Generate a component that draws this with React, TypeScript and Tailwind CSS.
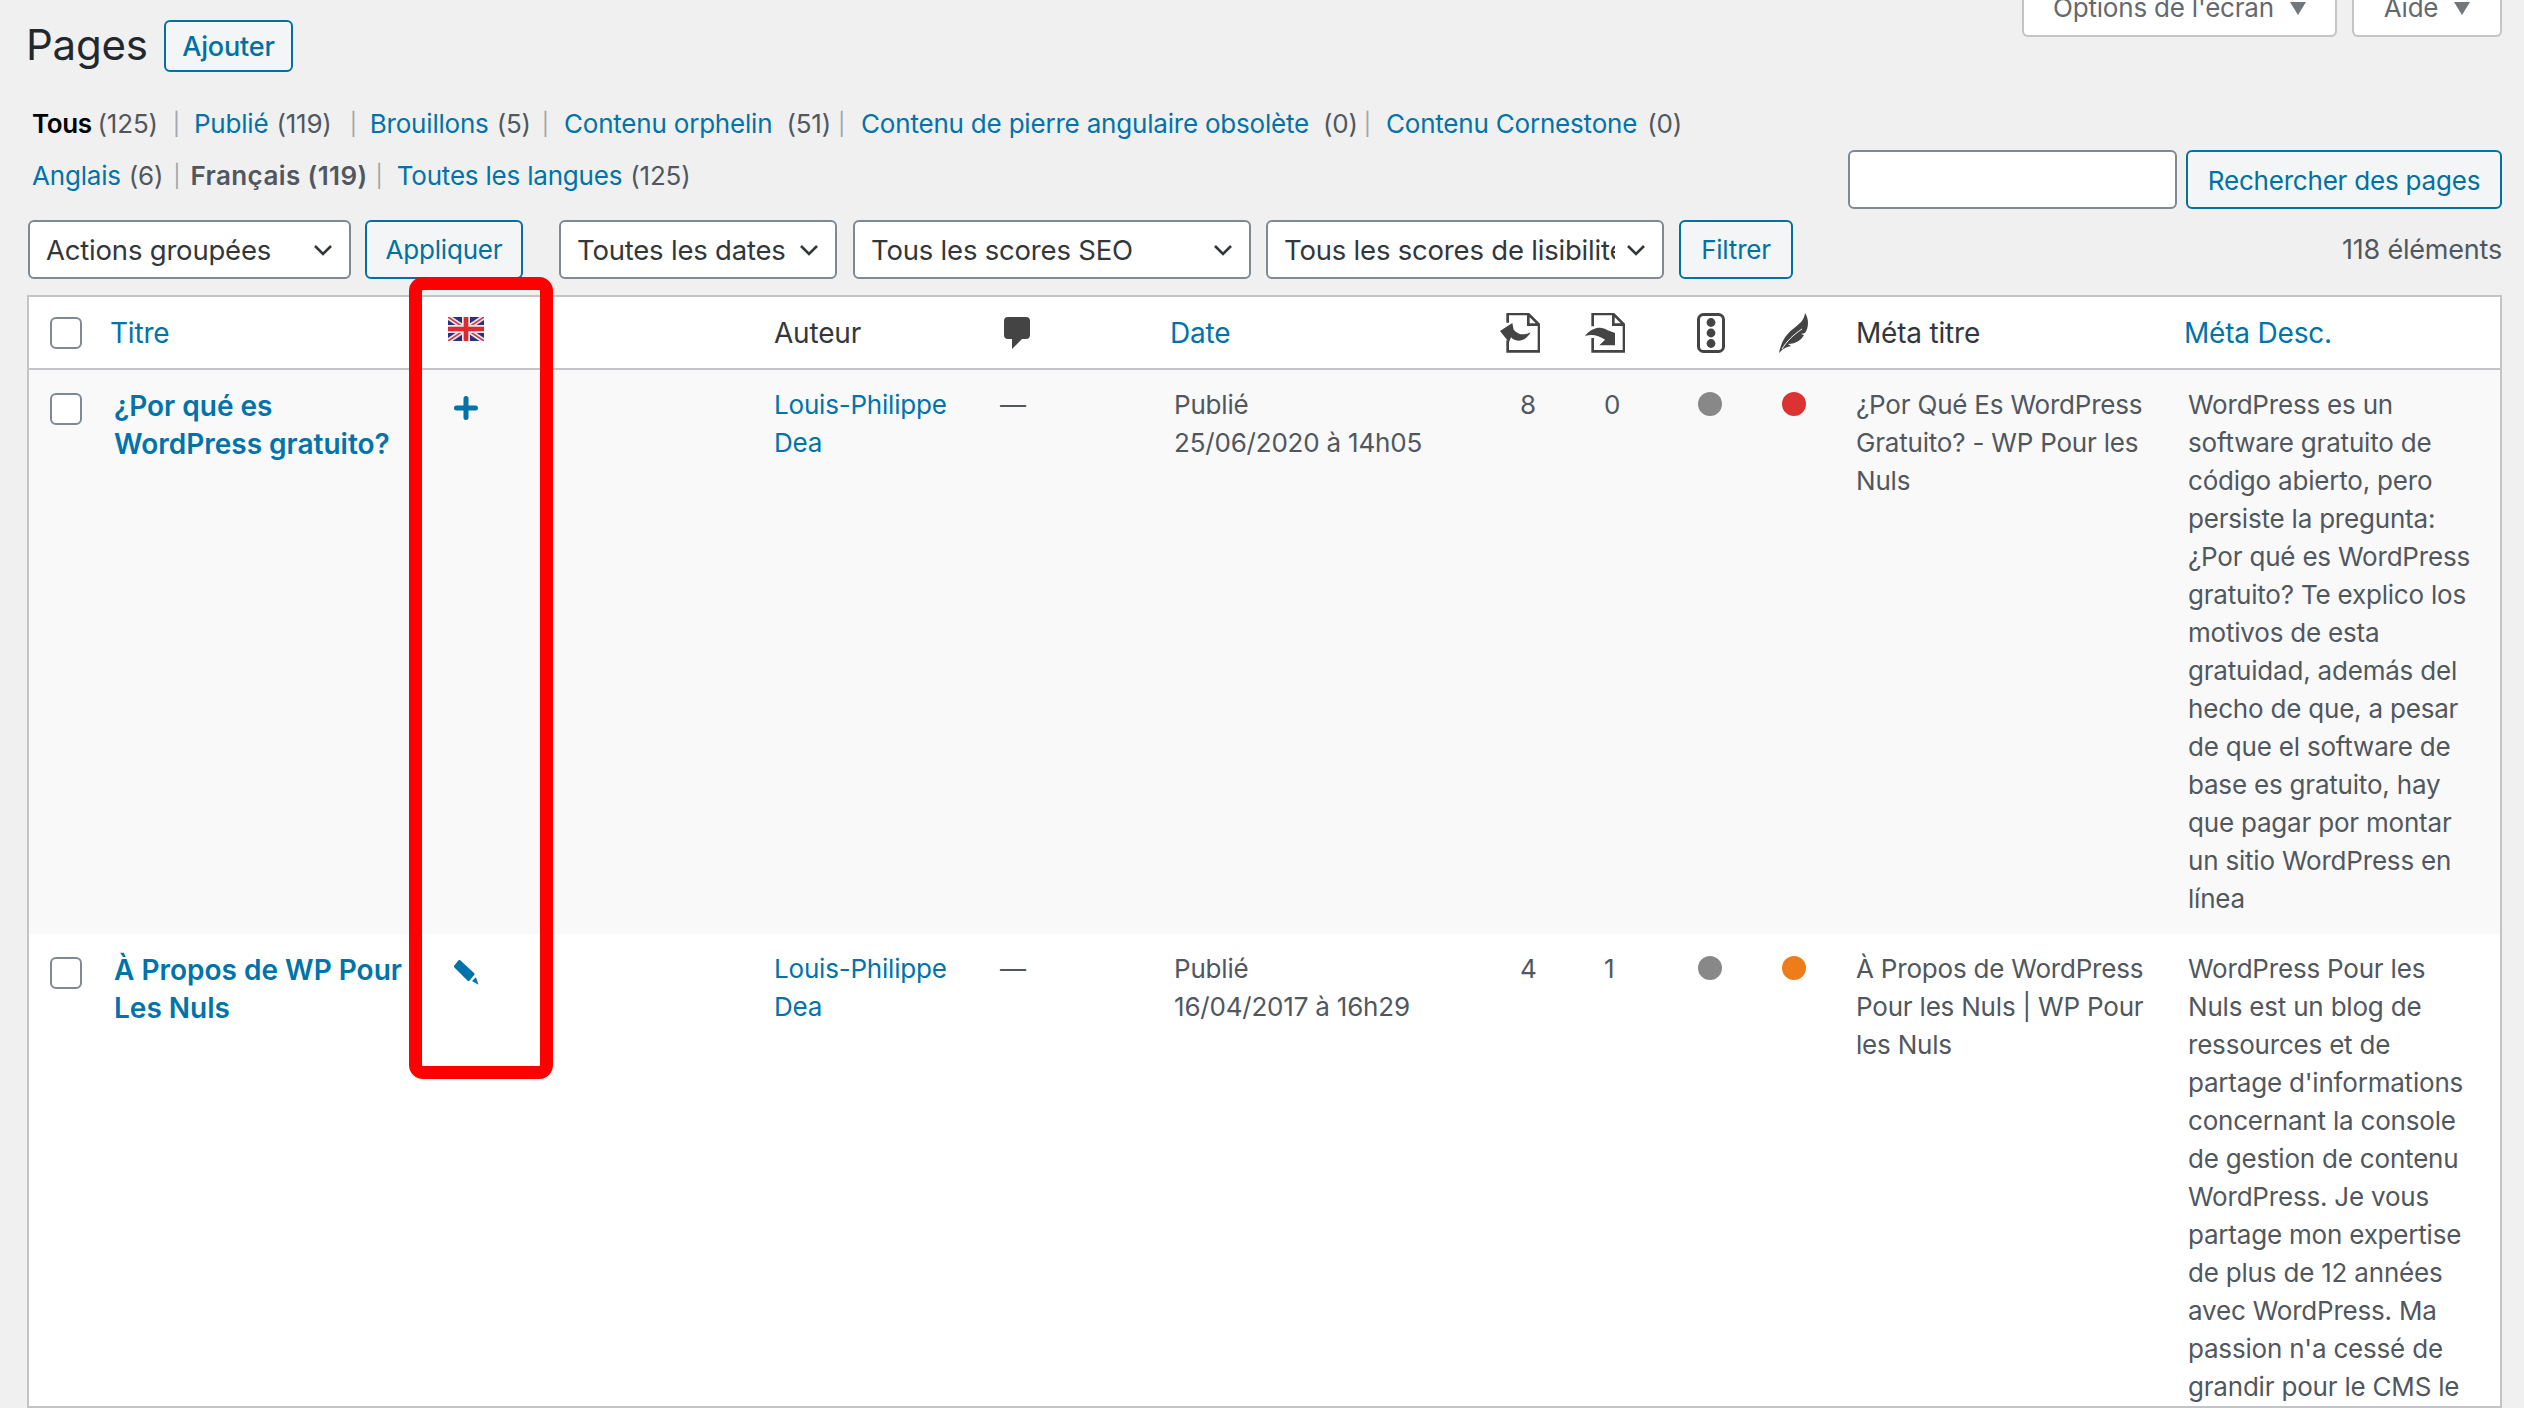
import { ReactNode } from 'react'

const font = "font-['Inter',sans-serif]"

const descOne = [
  'WordPress es un',
  'software gratuito de',
  'código abierto, pero',
  'persiste la pregunta:',
  '¿Por qué es WordPress',
  'gratuito? Te explico los',
  'motivos de esta',
  'gratuidad, además del',
  'hecho de que, a pesar',
  'de que el software de',
  'base es gratuito, hay',
  'que pagar por montar',
  'un sitio WordPress en',
  'línea',
]

const descTwo = [
  'WordPress Pour les',
  'Nuls est un blog de',
  'ressources et de',
  "partage d'informations",
  'concernant la console',
  'de gestion de contenu',
  'WordPress. Je vous',
  'partage mon expertise',
  'de plus de 12 années',
  'avec WordPress. Ma',
  "passion n'a cessé de",
  'grandir pour le CMS le',
]

function Lines({ items }: { items: string[] }) {
  return (
    <>
      {items.map((line) => (
        <div key={line} className="whitespace-nowrap">{line}</div>
      ))}
    </>
  )
}

function Chevron() {
  return (
    <svg width="20" height="12" viewBox="0 0 20 12" className="shrink-0">
      <path d="M2 2l8 8 8-8" fill="none" stroke="#32373c" strokeWidth="2.6" />
    </svg>
  )
}

function Select({ label, className, textClass }: { label: string; className: string; textClass?: string }) {
  return (
    <div className={`flex h-[59px] items-center justify-between rounded-[6px] border-2 border-[#7e8993] bg-white pl-[16px] pr-[16px] text-[27.5px] text-[#32373c] ${className}`}>
      <span className={`overflow-hidden whitespace-nowrap ${textClass ?? ''}`}>{label}</span>
      <Chevron />
    </div>
  )
}

function OutlineButton({ children, className }: { children: ReactNode; className: string }) {
  return (
    <button className={`flex items-center justify-center rounded-[6px] border-2 border-[#0071a1] bg-[#f3f5f6] text-[#0071a1] ${className}`}>
      {children}
    </button>
  )
}

function Link({ children, className }: { children: ReactNode; className?: string }) {
  return <span className={`text-[#0073aa] ${className ?? ''}`}>{children}</span>
}

function Sep({ className }: { className: string }) {
  return <span className={`text-[22px] text-[#a0a5aa] ${className}`}>|</span>
}

function TabArrow() {
  return (
    <svg width="16" height="13" viewBox="0 0 16 13" className="block shrink-0">
      <path d="M0 0h16L8 13z" fill="#72777c" />
    </svg>
  )
}

function Checkbox() {
  return <div className="h-[32px] w-[32px] rounded-[6px] border-2 border-[#7e8993] bg-white" />
}

function Dot({ color }: { color: string }) {
  return <div className={`h-[24px] w-[24px] rounded-full ${color}`} />
}

function UkFlag() {
  return (
    <svg width="36" height="24" viewBox="0 0 36 24" className="block">
      <rect width="36" height="24" fill="#27337f" />
      <path d="M0 0l36 24M36 0L0 24" stroke="#f3e4e8" strokeWidth="5" />
      <path d="M0 0l36 24M36 0L0 24" stroke="#d8384a" strokeWidth="1.6" />
      <path d="M18 0v24M0 12h36" stroke="#f6e6e8" strokeWidth="8" />
      <path d="M18 0v24M0 12h36" stroke="#dc2a30" strokeWidth="4.6" />
    </svg>
  )
}

function PlusIcon() {
  return (
    <svg width="24" height="24" viewBox="0 0 24 24" className="block">
      <path d="M12 2.5v19M2.5 12h19" stroke="#0073aa" strokeWidth="5" strokeLinecap="round" />
    </svg>
  )
}

function PencilIcon() {
  return (
    <svg width="25" height="25" viewBox="0 0 25 25" className="block">
      <path d="M5.5 1.5L1.5 6.5 14.5 19.5 19 14z" fill="#0073aa" stroke="#0073aa" strokeWidth="3" strokeLinejoin="round" />
      <path d="M18 21L22 17.3 24.5 24.7z" fill="#0073aa" />
    </svg>
  )
}

function CommentIcon() {
  return (
    <svg width="26" height="32" viewBox="0 0 26 32" className="block">
      <path d="M4 0h18a4 4 0 0 1 4 4v14a4 4 0 0 1-4 4h-4l-10 10V22H4a4 4 0 0 1-4-4V4a4 4 0 0 1 4-4z" fill="#444" />
    </svg>
  )
}

function InboundIcon() {
  return (
    <svg width="40" height="40" viewBox="0 0 120 120" className="block">
      <path d="M23 29V3h62l32 32v80H23V82M85 3v32h32" fill="none" stroke="#444" strokeWidth="8" />
      <path d="M0 54L37 30 41 50C54 66 74 68 92 58 80 82 50 92 33 73L27 88z" fill="#444" />
    </svg>
  )
}

function OutboundIcon() {
  return (
    <svg width="40" height="40" viewBox="0 0 120 120" className="block">
      <path d="M23 40V3h62l32 32v80H23V75M85 3v32h32" fill="none" stroke="#444" strokeWidth="8" />
      <path d="M0 69C20 42 50 38 68 52L90 60V97H43L60 80C40 66 20 62 0 69z" fill="#444" />
    </svg>
  )
}

function TrafficIcon() {
  return (
    <svg width="28" height="40" viewBox="0 0 28 40" className="block">
      <rect x="1.5" y="1.5" width="25" height="37" rx="5" fill="none" stroke="#444" strokeWidth="3" />
      <circle cx="14" cy="9.5" r="4.4" fill="#444" />
      <circle cx="14" cy="20" r="4.4" fill="#444" />
      <circle cx="14" cy="30.5" r="4.4" fill="#444" />
    </svg>
  )
}

function FeatherIcon() {
  return (
    <svg width="32" height="40" viewBox="0 0 32 40" className="block">
      <path d="M0 40C2 30 6 22 14 16 20 11 25 8 26 0 30 6 30 14 26 20L22 21 25 22C22 28 15 31 9 31L12 33C8 34 5 35 3 37z" fill="#444" />
      <path d="M3 36C8 28 14 22 23 16" fill="none" stroke="#fff" strokeWidth="1" />
    </svg>
  )
}

function Cell({ children, className }: { children?: ReactNode; className?: string }) {
  return <td className={`align-top ${className ?? ''}`}>{children}</td>
}

export default function App() {
  return (
    <div className={`relative h-[1408px] w-[2524px] overflow-hidden bg-[#f0f0f1] pl-[27px] pr-[22px] text-[26px] leading-[38px] tracking-[-0.2px] text-[#50575e] ${font}`}>
      {/* Title and screen tabs */}
      <div className="flex h-[72px] items-start justify-between">
        <div className="flex items-center pt-5">
          <h1 className="-ml-[1px] w-[120px] pb-[2px] text-[42px] leading-[46px] text-[#23282d]">Pages</h1>
          <OutlineButton className="ml-[18px] h-[52px] w-[129px] pt-[2px] text-[27px] font-medium">Ajouter</OutlineButton>
        </div>
        <div className="flex gap-[15px] text-[#646970]">
          <div className="flex h-[37px] w-[315px] items-end justify-center gap-4 rounded-b-[6px] border-2 border-t-0 border-[#c3c4c7] bg-white pb-[8px]">
            <span className="whitespace-nowrap">Options de l'écran</span>
            <span className="pb-[12px]"><TabArrow /></span>
          </div>
          <div className="flex h-[37px] w-[150px] items-end justify-center gap-4 rounded-b-[6px] border-2 border-t-0 border-[#c3c4c7] bg-white pb-[8px]">
            <span>Aide</span>
            <span className="pb-[12px]"><TabArrow /></span>
          </div>
        </div>
      </div>

      {/* Status filters */}
      <div className="mt-[33px] flex whitespace-nowrap pl-[5px]">
        <b className="font-semibold tracking-[-0.4px] text-black">Tous</b>
        <span className="ml-[6px]">(125)</span>
        <Sep className="ml-[15px]" />
        <Link className="ml-[14px]">Publié</Link>
        <span className="ml-2">(119)</span>
        <Sep className="ml-[18px]" />
        <Link className="ml-[13px]">Brouillons</Link>
        <span className="ml-2">(5)</span>
        <Sep className="ml-[11px]" />
        <Link className="ml-[15px]">Contenu orphelin</Link>
        <span className="ml-[14px]">(51)</span>
        <Sep className="ml-[7px]" />
        <Link className="ml-[16px]">Contenu de pierre angulaire obsolète</Link>
        <span className="ml-[14px]">(0)</span>
        <Sep className="ml-[6px]" />
        <Link className="ml-[15px]">Contenu Cornestone</Link>
        <span className="ml-[10px]">(0)</span>
      </div>

      {/* Language filters and search */}
      <div className="flex h-[77px] justify-between">
        <div className="flex whitespace-nowrap pl-[5px] pt-[14px]">
          <Link>Anglais</Link>
          <span className="ml-2">(6)</span>
          <Sep className="ml-[10px]" />
          <b className="ml-[10px] font-semibold tracking-[0.4px]">Français (119)</b>
          <Sep className="ml-2" />
          <Link className="ml-[14px]">Toutes les langues</Link>
          <span className="ml-2">(125)</span>
        </div>
        <div className="flex gap-[9px] pt-[7px]">
          <input className="h-[59px] w-[329px] rounded-[6px] border-2 border-[#7e8993] bg-white" aria-label="Rechercher" />
          <OutlineButton className="h-[59px] w-[316px] pt-[2px]">Rechercher des pages</OutlineButton>
        </div>
      </div>

      {/* Bulk actions and filters */}
      <div className="flex h-[59px] items-center whitespace-nowrap">
        <Select label="Actions groupées" className="ml-[1px] w-[323px]" />
        <OutlineButton className="ml-[14px] h-[59px] w-[158px]">Appliquer</OutlineButton>
        <Select label="Toutes les dates" className="ml-[36px] w-[278px]" />
        <Select label="Tous les scores SEO" className="ml-[16px] w-[398px]" />
        <Select label="Tous les scores de lisibilité" className="ml-[15px] w-[398px]" textClass="w-[331px]" />
        <OutlineButton className="ml-[15px] h-[59px] w-[114px]">Filtrer</OutlineButton>
        <span className="ml-auto text-[27px]">118 éléments</span>
      </div>

      {/* Pages table */}
      <table className="mt-4 w-[2475px] table-fixed border-separate border-spacing-0 border-2 border-[#c3c4c7] bg-white">
        <colgroup>
          <col className="w-[70px]" />
          <col className="w-[333px]" />
          <col className="w-[326px]" />
          <col className="w-[225px]" />
          <col className="w-[176px]" />
          <col className="w-[346px]" />
          <col className="w-[84px]" />
          <col className="w-[84px]" />
          <col className="w-[84px]" />
          <col className="w-[84px]" />
          <col className="w-[332px]" />
          <col className="w-[327px]" />
        </colgroup>
        <thead>
          <tr className="h-[73px] text-left text-[28px] font-normal">
            <th className="border-b-2 border-[#c3c4c7] pl-[21px] font-normal"><Checkbox /></th>
            <th className="border-b-2 border-[#c3c4c7] pl-[11px] font-normal"><Link>Titre</Link></th>
            <th className="border-b-2 border-[#c3c4c7] pb-[8px] pl-4 font-normal"><UkFlag /></th>
            <th className="border-b-2 border-[#c3c4c7] pl-4 font-normal text-[#32373c]">Auteur</th>
            <th className="border-b-2 border-[#c3c4c7] pl-[21px] font-normal"><CommentIcon /></th>
            <th className="border-b-2 border-[#c3c4c7] pl-[11px] font-normal"><Link>Date</Link></th>
            <th className="border-b-2 border-[#c3c4c7] font-normal"><div className="-ml-[5px]"><InboundIcon /></div></th>
            <th className="border-b-2 border-[#c3c4c7] font-normal"><div className="-ml-[4px]"><OutboundIcon /></div></th>
            <th className="border-b-2 border-[#c3c4c7] pl-6 font-normal"><TrafficIcon /></th>
            <th className="border-b-2 border-[#c3c4c7] pl-[22px] font-normal"><FeatherIcon /></th>
            <th className="border-b-2 border-[#c3c4c7] pl-[15px] font-normal text-[#32373c]">Méta titre</th>
            <th className="border-b-2 border-[#c3c4c7] pl-[11px] font-normal"><Link>Méta Desc.</Link></th>
          </tr>
        </thead>
        <tbody>
          <tr className="h-[564px] bg-[#f9f9f9]">
            <Cell className="pl-[21px] pt-[23px]"><Checkbox /></Cell>
            <Cell className="pl-[15px] pt-[17px] text-[28px] font-semibold tracking-normal">
              <Link><div>¿Por qué es</div><div>WordPress gratuito?</div></Link>
            </Cell>
            <Cell className="pl-[22px] pt-[26px]"><PlusIcon /></Cell>
            <Cell className="pl-4 pt-4"><Link><div>Louis-Philippe</div><div>Dea</div></Link></Cell>
            <Cell className="pl-[17px] pt-4">—</Cell>
            <Cell className="pl-[15px] pt-4"><div>Publié</div><div>25/06/2020 à 14h05</div></Cell>
            <Cell className="pl-[15px] pt-4">8</Cell>
            <Cell className="pl-[15px] pt-4">0</Cell>
            <Cell className="pl-[25px] pt-[22px]"><Dot color="bg-[#888888]" /></Cell>
            <Cell className="pl-[25px] pt-[22px]"><Dot color="bg-[#dc3232]" /></Cell>
            <Cell className="pl-[15px] pt-4"><Lines items={['¿Por Qué Es WordPress', 'Gratuito? - WP Pour les', 'Nuls']} /></Cell>
            <Cell className="pl-[15px] pt-4"><Lines items={descOne} /></Cell>
          </tr>
          <tr className="bg-white">
            <Cell className="pl-[21px] pt-[23px]"><Checkbox /></Cell>
            <Cell className="pl-[15px] pt-[17px] text-[28px] font-semibold tracking-normal">
              <Link><div className="whitespace-nowrap">À Propos de WP Pour</div><div>Les Nuls</div></Link>
            </Cell>
            <Cell className="pl-[22px] pt-[26px]"><PencilIcon /></Cell>
            <Cell className="pl-4 pt-4"><Link><div>Louis-Philippe</div><div>Dea</div></Link></Cell>
            <Cell className="pl-[17px] pt-4">—</Cell>
            <Cell className="pl-[15px] pt-4"><div>Publié</div><div>16/04/2017 à 16h29</div></Cell>
            <Cell className="pl-[15px] pt-4">4</Cell>
            <Cell className="pl-[15px] pt-4">1</Cell>
            <Cell className="pl-[25px] pt-[22px]"><Dot color="bg-[#888888]" /></Cell>
            <Cell className="pl-[25px] pt-[22px]"><Dot color="bg-[#ee7c1b]" /></Cell>
            <Cell className="pl-[15px] pt-4"><Lines items={['À Propos de WordPress', 'Pour les Nuls | WP Pour', 'les Nuls']} /></Cell>
            <Cell className="pl-[15px] pt-4"><Lines items={descTwo} /></Cell>
          </tr>
        </tbody>
      </table>

      {/* Red highlight drawn over the language column */}
      <div className="pointer-events-none absolute left-[409px] top-[277px] h-[802px] w-[144px] rounded-[14px] border-[13px] border-[#ff0000]" />
    </div>
  )
}
